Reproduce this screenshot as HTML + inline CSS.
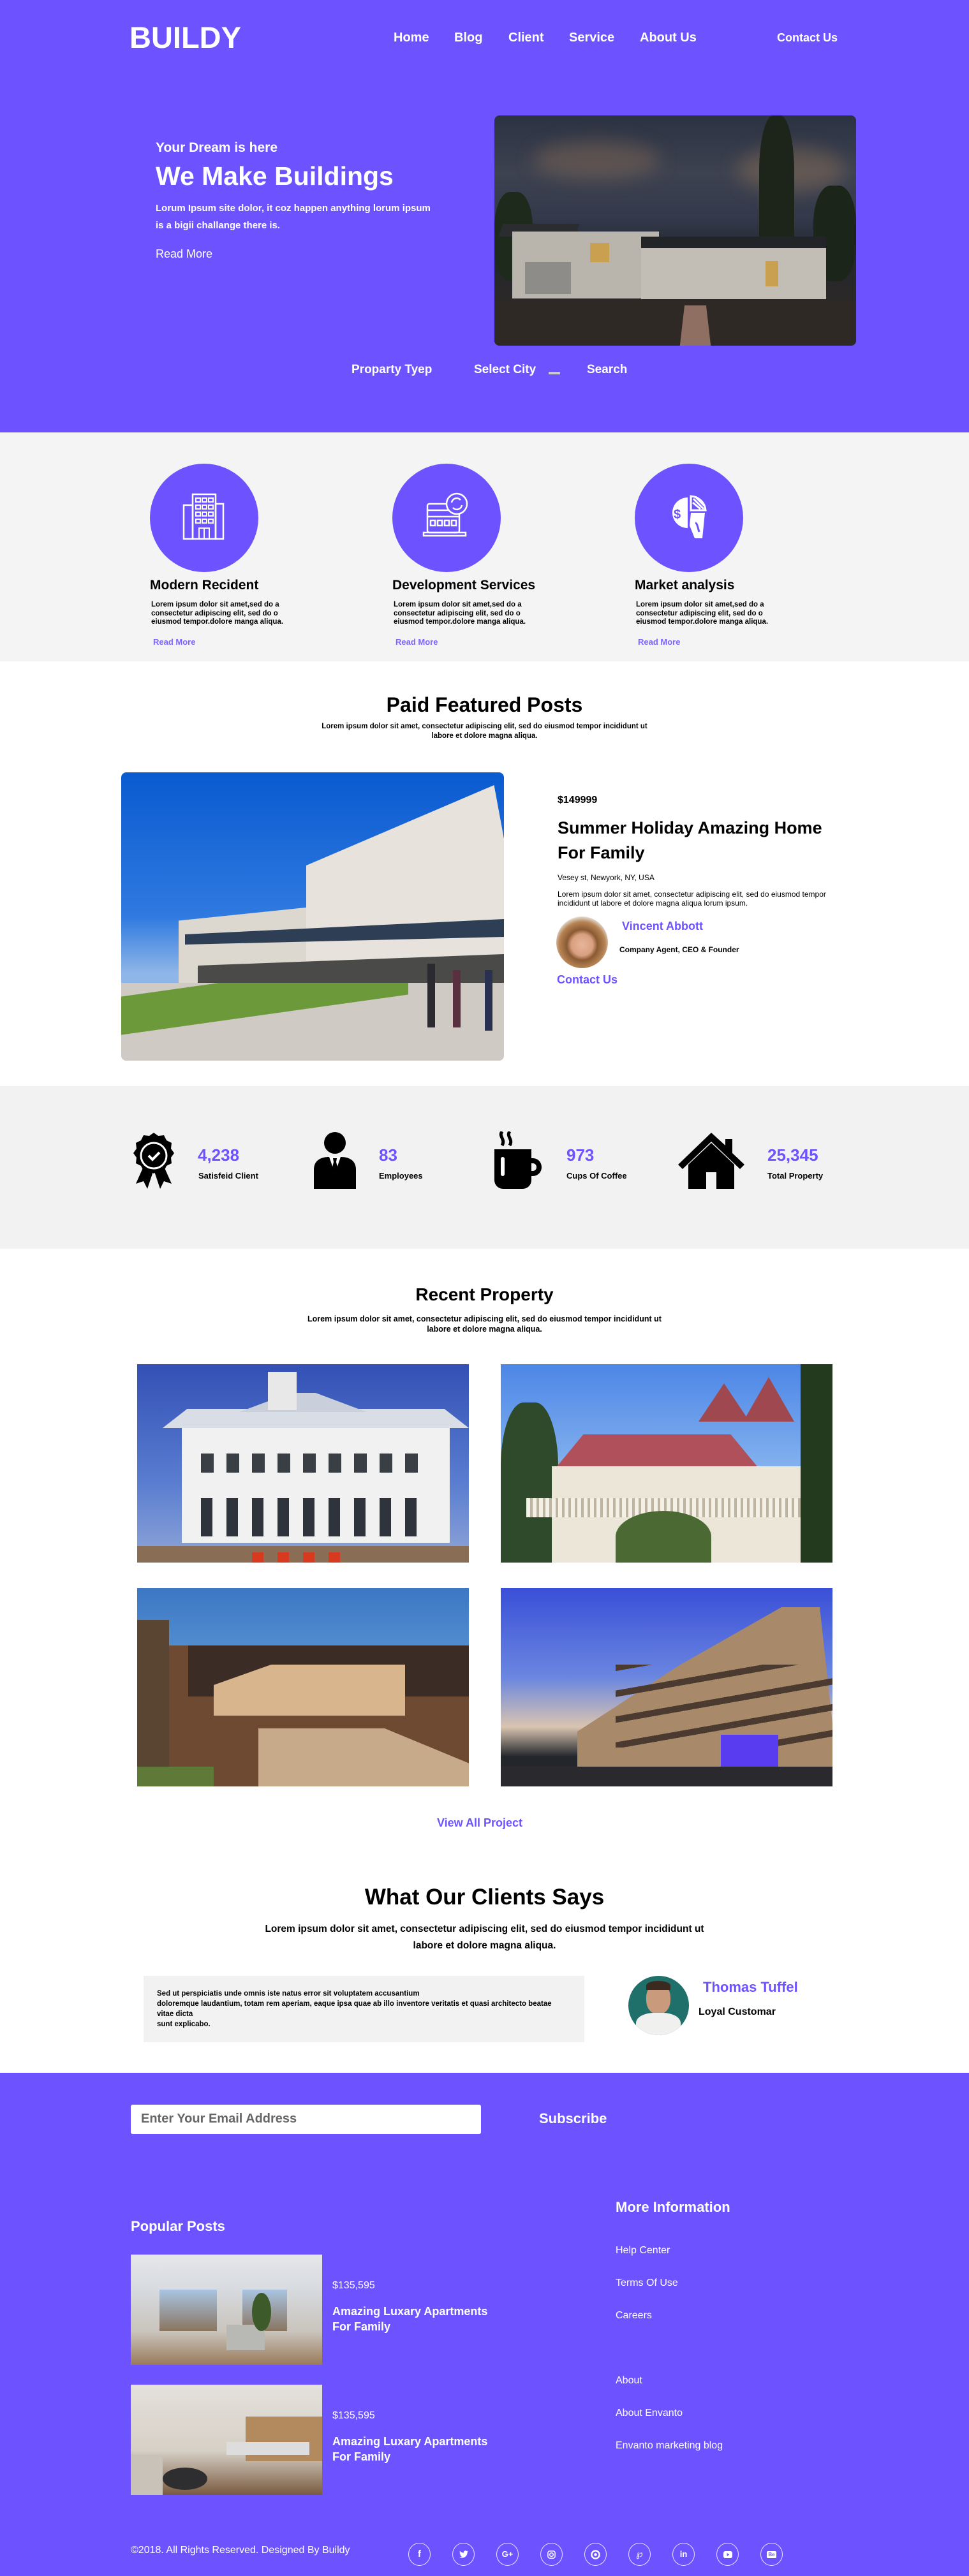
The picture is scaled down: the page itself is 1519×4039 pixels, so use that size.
<!DOCTYPE html>
<html><head><meta charset="utf-8">
<style>
*{margin:0;padding:0;box-sizing:border-box}
body{width:1519px;height:4039px;position:relative;font-family:"Liberation Sans",Arial,sans-serif;background:#fff;overflow:hidden;color:#000}
.a{position:absolute;white-space:nowrap}
.p{color:#6c53ff}
.w{color:#fff}
.b{font-weight:bold}
.img{position:absolute;overflow:hidden}
.circ{position:absolute;width:170px;height:170px;border-radius:50%;background:#6c53ff}
.soc{position:absolute;width:35px;height:36px;border:1px solid rgba(255,255,255,.85);border-radius:50%;color:#fff;font-weight:bold;font-size:13px;text-align:center;line-height:34px}
</style></head><body>

<!-- HERO -->
<div style="position:absolute;left:0;top:0;width:1519px;height:678px;background:#6c53ff"></div>
<div class="a w b" style="left:203px;top:31px;font-size:47px;letter-spacing:0px">BUILDY</div>
<div class="a w b" style="left:617px;top:48px;font-size:20px">Home</div>
<div class="a w b" style="left:712px;top:48px;font-size:20px">Blog</div>
<div class="a w b" style="left:797px;top:48px;font-size:20px">Client</div>
<div class="a w b" style="left:892px;top:48px;font-size:20px">Service</div>
<div class="a w b" style="left:1003px;top:48px;font-size:20px">About Us</div>
<div class="a w b" style="left:1218px;top:49px;font-size:18px">Contact Us</div>

<div class="a w b" style="left:244px;top:220px;font-size:21px">Your Dream is here</div>
<div class="a w b" style="left:244px;top:253px;font-size:41px">We Make Buildings</div>
<div class="a w b" style="left:244px;top:313px;font-size:15px;line-height:27px">Lorum Ipsum site dolor, it coz happen anything lorum ipsum<br>is a bigii challange there is.</div>
<div class="a w" style="left:244px;top:388px;font-size:18px">Read More</div>

<div class="img" style="left:775px;top:181px;width:567px;height:361px;border-radius:8px;background:linear-gradient(180deg,#2b3242 0%,#3d4250 25%,#33394a 45%,#23262e 60%,#2b2927 80%,#3a332f 100%)">
  <div style="position:absolute;left:60px;top:40px;width:200px;height:60px;background:rgba(160,120,90,.35);border-radius:50%;filter:blur(14px)"></div>
  <div style="position:absolute;left:380px;top:50px;width:170px;height:70px;background:rgba(170,130,90,.35);border-radius:50%;filter:blur(14px)"></div>
  <div style="position:absolute;left:415px;top:0;width:55px;height:220px;background:#1d2419;border-radius:40% 40% 10% 10%"></div>
  <div style="position:absolute;left:0;top:120px;width:60px;height:140px;background:#1e2a1b;border-radius:40%"></div>
  <div style="position:absolute;left:500px;top:110px;width:67px;height:150px;background:#1c2519;border-radius:40%"></div>
  <div style="position:absolute;left:10px;top:170px;width:120px;height:20px;background:#2a2c30;transform:skewX(-20deg)"></div>
  <div style="position:absolute;left:28px;top:182px;width:230px;height:105px;background:#b9b4ac"></div>
  <div style="position:absolute;left:230px;top:190px;width:290px;height:20px;background:#222428"></div>
  <div style="position:absolute;left:230px;top:208px;width:290px;height:80px;background:#c2beb6"></div>
  <div style="position:absolute;left:48px;top:230px;width:72px;height:50px;background:#8e8c88"></div>
  <div style="position:absolute;left:150px;top:200px;width:30px;height:30px;background:#c8a050"></div>
  <div style="position:absolute;left:425px;top:228px;width:20px;height:40px;background:#c8a050"></div>
  <div style="position:absolute;left:0;top:290px;width:567px;height:71px;background:#2e2925"></div>
  <div style="position:absolute;left:295px;top:288px;width:40px;height:73px;background:#8f6f62;transform:perspective(100px) rotateX(30deg)"></div>
</div>

<div class="a w b" style="left:551px;top:569px;font-size:19px">Proparty Tyep</div>
<div class="a w b" style="left:743px;top:569px;font-size:19px">Select City</div>
<div style="position:absolute;left:860px;top:583px;width:18px;height:4px;background:#c9c9c9"></div>
<div class="a w b" style="left:920px;top:569px;font-size:19px">Search</div>

<!-- SERVICES -->
<div style="position:absolute;left:0;top:678px;width:1519px;height:359px;background:#f4f4f4"></div>
<div class="circ" style="left:235px;top:727px"></div>
<div class="circ" style="left:615px;top:727px"></div>
<div class="circ" style="left:995px;top:727px"></div>
<svg style="position:absolute;left:280px;top:770px" width="80" height="80" viewBox="0 0 80 80" fill="none" stroke="#fff" stroke-width="2.5">
 <rect x="22" y="5" width="36" height="70"/><rect x="8" y="22" width="14" height="53"/><rect x="58" y="20" width="12" height="55"/>
 <g stroke-width="2"><rect x="27" y="11" width="7" height="6"/><rect x="37" y="11" width="7" height="6"/><rect x="47" y="11" width="7" height="6"/>
 <rect x="27" y="22" width="7" height="6"/><rect x="37" y="22" width="7" height="6"/><rect x="47" y="22" width="7" height="6"/>
 <rect x="27" y="33" width="7" height="6"/><rect x="37" y="33" width="7" height="6"/><rect x="47" y="33" width="7" height="6"/>
 <rect x="27" y="44" width="7" height="6"/><rect x="37" y="44" width="7" height="6"/><rect x="47" y="44" width="7" height="6"/>
 <rect x="32" y="58" width="16" height="17"/><line x1="40" y1="58" x2="40" y2="75"/></g>
</svg>
<svg style="position:absolute;left:660px;top:770px" width="80" height="80" viewBox="0 0 80 80" fill="none" stroke="#fff" stroke-width="2.5">
 <rect x="10" y="20" width="50" height="45" rx="3"/><line x1="10" y1="30" x2="60" y2="30"/><line x1="10" y1="40" x2="60" y2="40"/>
 <rect x="15" y="46" width="7" height="8"/><rect x="26" y="46" width="7" height="8"/><rect x="37" y="46" width="7" height="8"/><rect x="48" y="46" width="7" height="8"/>
 <path d="M4 65h66v5H4z"/><circle cx="56" cy="20" r="16" fill="#6c53ff"/><path d="M48 18a8 8 0 0 1 14-4M64 22a8 8 0 0 1-14 4"/>
</svg>
<svg style="position:absolute;left:1040px;top:770px" width="80" height="80" viewBox="0 0 80 80">
 <path d="M38 10A24 24 0 0 0 38 58Z" fill="#fff"/><text x="16" y="43" font-size="20" font-weight="bold" fill="#6c53ff" font-family="Liberation Sans">$</text>
 <path d="M43 8A24 24 0 0 1 66 30H43Z" fill="none" stroke="#fff" stroke-width="3"/><path d="M47 12l16 16M50 9l14 14M46 18l12 10" stroke="#fff" stroke-width="3"/>
 <path d="M43 34h22l-4 40h-12l-8-20z" fill="#fff"/><path d="M50 50c3 0 4 8 6 14" stroke="#6c53ff" stroke-width="3" fill="none"/>
</svg>

<div class="a b" style="left:235px;top:906px;font-size:21px">Modern Recident</div>
<div class="a b" style="left:615px;top:906px;font-size:21px">Development Services</div>
<div class="a b" style="left:995px;top:906px;font-size:21px">Market analysis</div>
<div class="a b" style="left:237px;top:942px;font-size:11.5px;line-height:13.5px">Lorem ipsum dolor sit amet,sed do a<br>consectetur adipiscing elit, sed do o<br>eiusmod tempor.dolore manga aliqua.</div>
<div class="a b" style="left:617px;top:942px;font-size:11.5px;line-height:13.5px">Lorem ipsum dolor sit amet,sed do a<br>consectetur adipiscing elit, sed do o<br>eiusmod tempor.dolore manga aliqua.</div>
<div class="a b" style="left:997px;top:942px;font-size:11.5px;line-height:13.5px">Lorem ipsum dolor sit amet,sed do a<br>consectetur adipiscing elit, sed do o<br>eiusmod tempor.dolore manga aliqua.</div>
<div class="a b" style="left:240px;top:999px;font-size:13px;color:#7d63ff">Read More</div>
<div class="a b" style="left:620px;top:999px;font-size:13px;color:#7d63ff">Read More</div>
<div class="a b" style="left:1000px;top:999px;font-size:13px;color:#7d63ff">Read More</div>

<!-- FEATURED -->
<div class="a b" style="left:0;width:1519px;text-align:center;top:1087px;font-size:32px">Paid Featured Posts</div>
<div class="a b" style="left:0;width:1519px;text-align:center;top:1132px;font-size:11.5px;line-height:15px">Lorem ipsum dolor sit amet, consectetur adipiscing elit, sed do eiusmod tempor incididunt ut<br>labore et dolore magna aliqua.</div>

<div class="img" style="left:190px;top:1211px;width:600px;height:452px;border-radius:8px;background:linear-gradient(180deg,#0a5ad0 0%,#2f7ae0 50%,#8fb6e8 70%)">
  <div style="position:absolute;left:0;top:330px;width:600px;height:122px;background:#cfcac3"></div>
  <div style="position:absolute;left:0;top:320px;width:450px;height:60px;background:#6c9a3a;transform:skewY(-8deg)"></div>
  <div style="position:absolute;left:90px;top:180px;width:510px;height:150px;background:#dcd7cf;clip-path:polygon(0 35%,100% 0,100% 100%,0 100%)"></div>
  <div style="position:absolute;left:290px;top:20px;width:310px;height:280px;background:#e7e3dc;clip-path:polygon(0 45%,95% 0,100% 30%,100% 100%,0 100%)"></div>
  <div style="position:absolute;left:100px;top:230px;width:500px;height:40px;background:#2d3e55;clip-path:polygon(0 60%,100% 0,100% 70%,0 100%)"></div>
  <div style="position:absolute;left:120px;top:285px;width:480px;height:45px;background:#4a4a48;clip-path:polygon(0 40%,100% 0,100% 100%,0 100%)"></div>
  <div style="position:absolute;left:480px;top:300px;width:12px;height:100px;background:#2a2a30"></div>
  <div style="position:absolute;left:520px;top:310px;width:12px;height:90px;background:#5a3040"></div>
  <div style="position:absolute;left:570px;top:310px;width:12px;height:95px;background:#2a3050"></div>
</div>
<div class="a b" style="left:874px;top:1246px;font-size:16px">$149999</div>
<div class="a b" style="left:874px;top:1279px;font-size:27px;line-height:39px">Summer Holiday Amazing Home<br>For Family</div>
<div class="a" style="left:874px;top:1369px;font-size:12px">Vesey st, Newyork, NY, USA</div>
<div class="a" style="left:874px;top:1395px;font-size:12px;line-height:14px">Lorem ipsum dolor sit amet, consectetur adipiscing elit, sed do eiusmod tempor<br>incididunt ut labore et dolore magna aliqua lorum ipsum.</div>
<div class="img" style="left:872px;top:1437px;width:81px;height:81px;border-radius:50%;background:radial-gradient(circle at 50% 55%,#e8b59a 0,#d8a080 28%,#8a5a32 40%,#b78455 60%,#e9e6e0 75%)"></div>
<div class="a p b" style="left:975px;top:1442px;font-size:18px">Vincent Abbott</div>
<div class="a b" style="left:971px;top:1482px;font-size:12px">Company Agent, CEO &amp; Founder</div>
<div class="a p b" style="left:873px;top:1526px;font-size:18px">Contact Us</div>

<!-- STATS -->
<div style="position:absolute;left:0;top:1703px;width:1519px;height:255px;background:#f2f2f2"></div>
<svg style="position:absolute;left:205px;top:1774px" width="72" height="90" viewBox="0 0 72 90">
 <path d="M20 55L8 82l12-4 6 12 10-30zM52 55l12 27-12-4-6 12-10-30z" fill="#000"/>
 <path d="M36 2l7 5 9-1 4 8 8 4-1 9 5 7-5 7 1 9-8 4-4 8-9-1-7 5-7-5-9 1-4-8-8-4 1-9-5-7 5-7-1-9 8-4 4-8 9 1z" fill="#000"/>
 <circle cx="36" cy="38" r="20" fill="none" stroke="#fff" stroke-width="3"/><path d="M28 38l6 6 11-11" stroke="#fff" stroke-width="4" fill="none"/>
</svg>
<svg style="position:absolute;left:490px;top:1774px" width="70" height="90" viewBox="0 0 70 90">
 <circle cx="35" cy="18" r="17" fill="#000"/><path d="M2 90V60c0-14 10-20 24-20h18c14 0 24 6 24 20v30z" fill="#000"/>
 <path d="M26 40l9 26 9-26z" fill="#fff"/><path d="M32 42h6l-1 6 3 12-5 6-5-6 3-12z" fill="#000"/>
</svg>
<svg style="position:absolute;left:773px;top:1774px" width="80" height="90" viewBox="0 0 80 90">
 <path d="M14 0c-6 8 6 12 0 22M26 0c-6 8 6 12 0 22" stroke="#000" stroke-width="5" fill="none"/>
 <path d="M2 28h58v48c0 8-6 14-14 14H16C8 90 2 84 2 76z" fill="#000"/>
 <path d="M58 42h4c8 0 14 6 14 14s-6 14-14 14h-4v-8h4c4 0 6-3 6-6s-2-6-6-6h-4z" fill="#000"/>
 <rect x="12" y="40" width="6" height="30" rx="3" fill="#fff"/>
</svg>
<svg style="position:absolute;left:1061px;top:1774px" width="108" height="90" viewBox="0 0 108 90">
 <path d="M54 2L2 52l7 7 45-43 45 43 7-7-19-18V12H76v10z" fill="#000"/>
 <path d="M18 52l36-34 36 34v38H62V64H46v26H18z" fill="#000"/>
</svg>
<div class="a p b" style="left:310px;top:1796px;font-size:26px">4,238</div>
<div class="a b" style="left:311px;top:1836px;font-size:13px">Satisfeid Client</div>
<div class="a p b" style="left:594px;top:1796px;font-size:26px">83</div>
<div class="a b" style="left:594px;top:1836px;font-size:13px">Employees</div>
<div class="a p b" style="left:888px;top:1796px;font-size:26px">973</div>
<div class="a b" style="left:888px;top:1836px;font-size:13px">Cups Of Coffee</div>
<div class="a p b" style="left:1203px;top:1796px;font-size:26px">25,345</div>
<div class="a b" style="left:1203px;top:1836px;font-size:13px">Total Property</div>

<!-- RECENT -->
<div class="a b" style="left:0;width:1519px;text-align:center;top:2014px;font-size:28px">Recent Property</div>
<div class="a b" style="left:0;width:1519px;text-align:center;top:2060px;font-size:12.5px;line-height:16px">Lorem ipsum dolor sit amet, consectetur adipiscing elit, sed do eiusmod tempor incididunt ut<br>labore et dolore magna aliqua.</div>

<div class="img" style="left:215px;top:2139px;width:520px;height:311px;background:linear-gradient(180deg,#3350b5,#5a7dd0 60%,#8fa6d8)">
  <div style="position:absolute;left:40px;top:70px;width:480px;height:30px;background:#d8dde6;clip-path:polygon(8% 0,92% 0,100% 100%,0 100%)"></div>
  <div style="position:absolute;left:160px;top:45px;width:200px;height:30px;background:#c9d0dc;clip-path:polygon(40% 0,60% 0,100% 100%,0 100%)"></div>
  <div style="position:absolute;left:205px;top:12px;width:45px;height:60px;background:#e8e8e8"></div>
  <div style="position:absolute;left:70px;top:100px;width:420px;height:180px;background:#f1f1f1"></div>
  <div style="position:absolute;left:100px;top:140px;width:360px;height:30px;background:repeating-linear-gradient(90deg,#3a3e45 0 20px,#f1f1f1 20px 40px)"></div>
  <div style="position:absolute;left:100px;top:210px;width:360px;height:60px;background:repeating-linear-gradient(90deg,#2e333c 0 18px,#f1f1f1 18px 40px)"></div>
  <div style="position:absolute;left:0;top:285px;width:520px;height:26px;background:#8a6d55"></div>
  <div style="position:absolute;left:180px;top:295px;width:140px;height:16px;background:repeating-linear-gradient(90deg,#d83a20 0 18px,transparent 18px 40px)"></div>
</div>
<div class="img" style="left:785px;top:2139px;width:520px;height:311px;background:linear-gradient(180deg,#4c86e6,#8cb8f0 60%,#a8c8ef)">
  <div style="position:absolute;left:0;top:60px;width:90px;height:251px;background:#2f4a2a;border-radius:40% 40% 0 0"></div>
  <div style="position:absolute;left:470px;top:0;width:50px;height:311px;background:#243a1f"></div>
  <div style="position:absolute;left:80px;top:110px;width:330px;height:60px;background:#b0505a;clip-path:polygon(15% 0,85% 0,100% 100%,0 100%)"></div>
  <div style="position:absolute;left:310px;top:30px;width:80px;height:60px;background:#a04850;clip-path:polygon(50% 0,100% 100%,0 100%)"></div>
  <div style="position:absolute;left:380px;top:20px;width:80px;height:70px;background:#a04850;clip-path:polygon(50% 0,100% 100%,0 100%)"></div>
  <div style="position:absolute;left:80px;top:160px;width:390px;height:151px;background:#ece6d8"></div>
  <div style="position:absolute;left:40px;top:210px;width:430px;height:30px;background:repeating-linear-gradient(90deg,#f4f0e6 0 6px,#bdb5a2 6px 10px)"></div>
  <div style="position:absolute;left:180px;top:230px;width:150px;height:81px;background:#4b6a33;border-radius:50% 50% 0 0"></div>
</div>
<div class="img" style="left:215px;top:2490px;width:520px;height:311px;background:linear-gradient(180deg,#3b77c4,#5a94d3 40%)">
  <div style="position:absolute;left:0;top:90px;width:520px;height:221px;background:#6e4a33"></div>
  <div style="position:absolute;left:0;top:50px;width:50px;height:261px;background:#5a4532"></div>
  <div style="position:absolute;left:80px;top:90px;width:440px;height:80px;background:#3c2c26"></div>
  <div style="position:absolute;left:120px;top:120px;width:300px;height:80px;background:#d8b58c;clip-path:polygon(0 40%,30% 0,100% 0,100% 100%,0 100%)"></div>
  <div style="position:absolute;left:190px;top:220px;width:330px;height:91px;background:#c6aa8a;clip-path:polygon(0 0,60% 0,100% 60%,100% 100%,0 100%)"></div>
  <div style="position:absolute;left:0;top:280px;width:120px;height:31px;background:#5f7a38"></div>
</div>
<div class="img" style="left:785px;top:2490px;width:520px;height:311px;background:linear-gradient(180deg,#3a4fd8,#6a86e0 45%,#d9c4b0 70%,#23272c 85%)">
  <div style="position:absolute;left:120px;top:30px;width:400px;height:260px;background:#a8896a;clip-path:polygon(40% 35%,80% 0,95% 0,100% 70%,100% 100%,0 100%,0 75%)"></div>
  <div style="position:absolute;left:180px;top:120px;width:340px;height:130px;background:repeating-linear-gradient(170deg,#4a3a30 0 10px,transparent 10px 40px)"></div>
  <div style="position:absolute;left:345px;top:230px;width:90px;height:50px;background:#5a3cf0"></div>
  <div style="position:absolute;left:0;top:280px;width:520px;height:31px;background:#2a2a2e"></div>
</div>
<div class="a p b" style="left:0;width:1504px;text-align:center;top:2848px;font-size:18px">View All Project</div>

<!-- CLIENTS -->
<div class="a b" style="left:0;width:1519px;text-align:center;top:2955px;font-size:35px">What Our Clients Says</div>
<div class="a b" style="left:0;width:1519px;text-align:center;top:3012px;font-size:15.5px;line-height:26px">Lorem ipsum dolor sit amet, consectetur adipiscing elit, sed do eiusmod tempor incididunt ut<br>labore et dolore magna aliqua.</div>
<div style="position:absolute;left:225px;top:3098px;width:691px;height:104px;background:#f2f2f2"></div>
<div class="a" style="left:246px;top:3118px;font-size:11.5px;line-height:16px;font-weight:bold">Sed ut perspiciatis unde omnis iste natus error sit voluptatem accusantium<br>doloremque laudantium, totam rem aperiam, eaque ipsa quae ab illo inventore veritatis et quasi architecto beatae<br>vitae dicta<br>sunt explicabo.</div>
<div class="img" style="left:985px;top:3098px;width:95px;height:93px;border-radius:50%;background:#1f6f6a">
  <div style="position:absolute;left:28px;top:12px;width:38px;height:48px;border-radius:45%;background:#c99a7c"></div>
  <div style="position:absolute;left:28px;top:8px;width:38px;height:14px;border-radius:50% 50% 0 0;background:#3a2a20"></div>
  <div style="position:absolute;left:12px;top:58px;width:70px;height:40px;border-radius:40% 40% 0 0;background:#f0f0ee"></div>
</div>
<div class="a p b" style="left:1102px;top:3103px;font-size:22px">Thomas Tuffel</div>
<div class="a b" style="left:1095px;top:3146px;font-size:16px">Loyal Customar</div>

<!-- FOOTER -->
<div style="position:absolute;left:0;top:3250px;width:1519px;height:789px;background:#6c53ff"></div>
<div style="position:absolute;left:205px;top:3300px;width:549px;height:46px;background:#fff;border-radius:3px"></div>
<div class="a b" style="left:221px;top:3311px;font-size:20px;color:#666">Enter Your Email Address</div>
<div class="a w b" style="left:845px;top:3309px;font-size:22px">Subscribe</div>
<div class="a w b" style="left:965px;top:3448px;font-size:22px">More Information</div>
<div class="a w b" style="left:205px;top:3478px;font-size:22px">Popular Posts</div>

<div class="img" style="left:205px;top:3535px;width:300px;height:173px;background:linear-gradient(180deg,#e6e6ea 0,#d8dbe0 30%,#c9c4bc 70%,#9a7a5a 100%)">
  <div style="position:absolute;left:45px;top:55px;width:90px;height:65px;background:linear-gradient(180deg,#a9c4e2,#8a7560)"></div>
  <div style="position:absolute;left:175px;top:55px;width:70px;height:65px;background:linear-gradient(180deg,#a9c4e2,#8a7560)"></div>
  <div style="position:absolute;left:150px;top:110px;width:60px;height:40px;background:#b8b8b4"></div>
  <div style="position:absolute;left:190px;top:60px;width:30px;height:60px;background:#3d5a2a;border-radius:50%"></div>
</div>
<div class="a w" style="left:521px;top:3575px;font-size:16px">$135,595</div>
<div class="a w b" style="left:521px;top:3612px;font-size:18px;line-height:24px">Amazing Luxary Apartments<br>For Family</div>

<div class="img" style="left:205px;top:3739px;width:300px;height:173px;background:linear-gradient(180deg,#e4e1dc,#d6d0c6 60%,#7a5a40)">
  <div style="position:absolute;left:180px;top:50px;width:120px;height:70px;background:#b38a5e"></div>
  <div style="position:absolute;left:150px;top:90px;width:130px;height:20px;background:#ddd"></div>
  <div style="position:absolute;left:50px;top:130px;width:70px;height:35px;background:#2e2e30;border-radius:50%"></div>
  <div style="position:absolute;left:0;top:110px;width:50px;height:63px;background:#c8c2b8"></div>
</div>
<div class="a w" style="left:521px;top:3779px;font-size:16px">$135,595</div>
<div class="a w b" style="left:521px;top:3816px;font-size:18px;line-height:24px">Amazing Luxary Apartments<br>For Family</div>

<div class="a w" style="left:965px;top:3520px;font-size:16px">Help Center</div>
<div class="a w" style="left:965px;top:3571px;font-size:16px">Terms Of Use</div>
<div class="a w" style="left:965px;top:3622px;font-size:16px">Careers</div>
<div class="a w" style="left:965px;top:3724px;font-size:16px">About</div>
<div class="a w" style="left:965px;top:3775px;font-size:16px">About Envanto</div>
<div class="a w" style="left:965px;top:3826px;font-size:16px">Envanto marketing blog</div>

<div class="a w" style="left:205px;top:3990px;font-size:16px">©2018. All Rights Reserved. Designed By Buildy</div>
<div class="soc" style="left:640px;top:3987px;font-size:15px">f</div>
<div class="soc" style="left:709px;top:3987px"><svg width="14" height="12" viewBox="0 0 24 20" style="margin-top:11px"><path fill="#fff" d="M24 2.4a10 10 0 0 1-2.8.8A5 5 0 0 0 23.3.4a10 10 0 0 1-3.1 1.2A4.9 4.9 0 0 0 11.8 6 14 14 0 0 1 1.7.9a4.9 4.9 0 0 0 1.5 6.6A5 5 0 0 1 1 6.9a4.9 4.9 0 0 0 3.9 4.9 5 5 0 0 1-2.2.1 4.9 4.9 0 0 0 4.6 3.4A9.9 9.9 0 0 1 0 17.300 14 14 0 0 0 7.5 19.5c9 0 14-7.5 14-14v-.6A10 10 0 0 0 24 2.4z"/></svg></div>
<div class="soc" style="left:778px;top:3987px">G+</div>
<div class="soc" style="left:847px;top:3987px"><svg width="13" height="13" viewBox="0 0 14 14" style="margin-top:11px"><rect x="1" y="1" width="12" height="12" rx="3" fill="none" stroke="#fff" stroke-width="1.6"/><circle cx="7" cy="7" r="3" fill="none" stroke="#fff" stroke-width="1.6"/></svg></div>
<div class="soc" style="left:916px;top:3987px"><svg width="15" height="15" viewBox="0 0 16 16" style="margin-top:10px"><circle cx="8" cy="8" r="6.5" fill="none" stroke="#fff" stroke-width="2.5"/><circle cx="8" cy="8" r="2.5" fill="#fff"/></svg></div>
<div class="soc" style="left:985px;top:3987px;font-weight:normal;font-size:15px">℘</div>
<div class="soc" style="left:1054px;top:3987px">in</div>
<div class="soc" style="left:1123px;top:3987px"><svg width="14" height="11" viewBox="0 0 14 11" style="margin-top:12px"><rect width="14" height="11" rx="3" fill="#fff"/><path d="M5.5 3v5l4-2.5z" fill="#6c53ff"/></svg></div>
<div class="soc" style="left:1192px;top:3987px"><span style="display:inline-block;background:#fff;color:#6c53ff;font-size:8px;line-height:11px;padding:0 2px;border-radius:2px;vertical-align:middle">Be</span></div>

</body></html>
